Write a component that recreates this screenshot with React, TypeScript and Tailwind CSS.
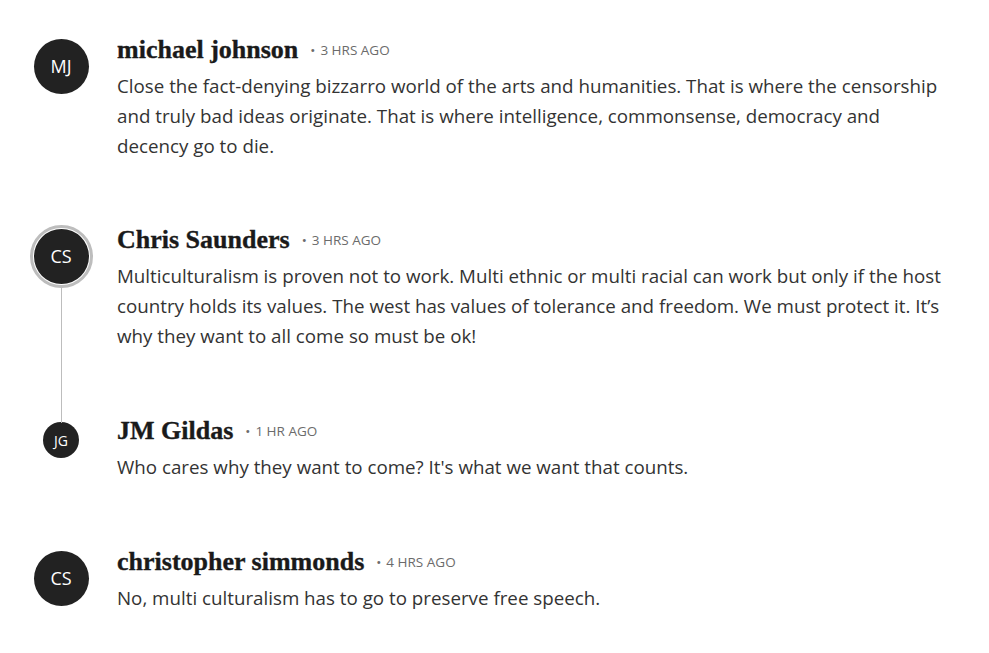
import React from "react";

type Comment = {
  initials: string;
  name: string;
  time: string;
  body: string;
  variant: "normal" | "ring" | "small";
};

const COMMENTS: Comment[] = [
  {
    initials: "MJ",
    name: "michael johnson",
    time: "3 HRS AGO",
    body: "Close the fact-denying bizzarro world of the arts and humanities. That is where the censorship and truly bad ideas originate. That is where intelligence, commonsense, democracy and decency go to die.",
    variant: "normal",
  },
  {
    initials: "CS",
    name: "Chris Saunders",
    time: "3 HRS AGO",
    body: "Multiculturalism is proven not to work. Multi ethnic or multi racial can work but only if the host country holds its values. The west has values of tolerance and freedom. We must protect it. It\u2019s why they want to all come so must be ok!",
    variant: "ring",
  },
  {
    initials: "JG",
    name: "JM Gildas",
    time: "1 HR AGO",
    body: "Who cares why they want to come? It's what we want that counts.",
    variant: "small",
  },
  {
    initials: "CS",
    name: "christopher simmonds",
    time: "4 HRS AGO",
    body: "No, multi culturalism has to go to preserve free speech.",
    variant: "normal",
  },
];

function Avatar({ initials, variant }: { initials: string; variant: Comment["variant"] }) {
  if (variant === "ring") {
    return (
      <div className="relative">
        <div className="w-[63px] h-[63px] rounded-full border-[3px] border-[#bdbdbd] bg-white p-[1px]">
          <div className="w-full h-full rounded-full bg-[#222] text-white flex items-center justify-center text-[18px] font-['Open_Sans',sans-serif]">
            {initials}
          </div>
        </div>
        {/* thread line down to the reply */}
        <div className="absolute top-[62px] left-[31px] w-[1.5px] h-[136px] bg-[#bdbdbd]" />
      </div>
    );
  }
  if (variant === "small") {
    return (
      <div className="w-[36px] h-[36px] rounded-full bg-[#222] text-white flex items-center justify-center text-[14px] font-['Open_Sans',sans-serif]">
        {initials}
      </div>
    );
  }
  return (
    <div className="w-[55px] h-[55px] rounded-full bg-[#222] text-white flex items-center justify-center text-[18px] font-['Open_Sans',sans-serif]">
      {initials}
    </div>
  );
}

function CommentRow({ c, className }: { c: Comment; className: string }) {
  const avatarBox =
    c.variant === "ring" ? "mt-[-2px]" : c.variant === "small" ? "mt-[4px]" : "mt-[2px]";
  return (
    <div className={`flex ${className}`}>
      <div className="w-[84px] mr-[14px] shrink-0 flex justify-center">
        <div className={avatarBox}>
          <Avatar initials={c.initials} variant={c.variant} />
        </div>
      </div>
      <div className="flex-1 pr-[39px]">
        <div className="flex items-center h-[26px]">
          <span className="font-['Liberation_Serif',serif] font-bold text-[26px] leading-none text-[#1a1a1a] [-webkit-text-stroke:0.35px_#1a1a1a]">
            {c.name}
          </span>
          <span className="ml-[12px] mt-[2px] text-[13.5px] leading-none text-[#6b6b6b] font-['Open_Sans',sans-serif]">
            <span className="mr-[5px]">•</span>
            {c.time}
          </span>
        </div>
        <p className="mt-[8px] text-[18.75px] leading-[30px] text-[#333] font-['Open_Sans',sans-serif]">{c.body}</p>
      </div>
    </div>
  );
}

export default function App() {
  return (
    <div className="w-[989px] h-[653px] bg-white pt-[37px] pl-[19px] overflow-hidden">
      <CommentRow c={COMMENTS[0]} className="" />
      <CommentRow c={COMMENTS[1]} className="mt-[66px]" />
      <CommentRow c={COMMENTS[2]} className="mt-[67px]" />
      <CommentRow c={COMMENTS[3]} className="mt-[67px]" />
    </div>
  );
}
